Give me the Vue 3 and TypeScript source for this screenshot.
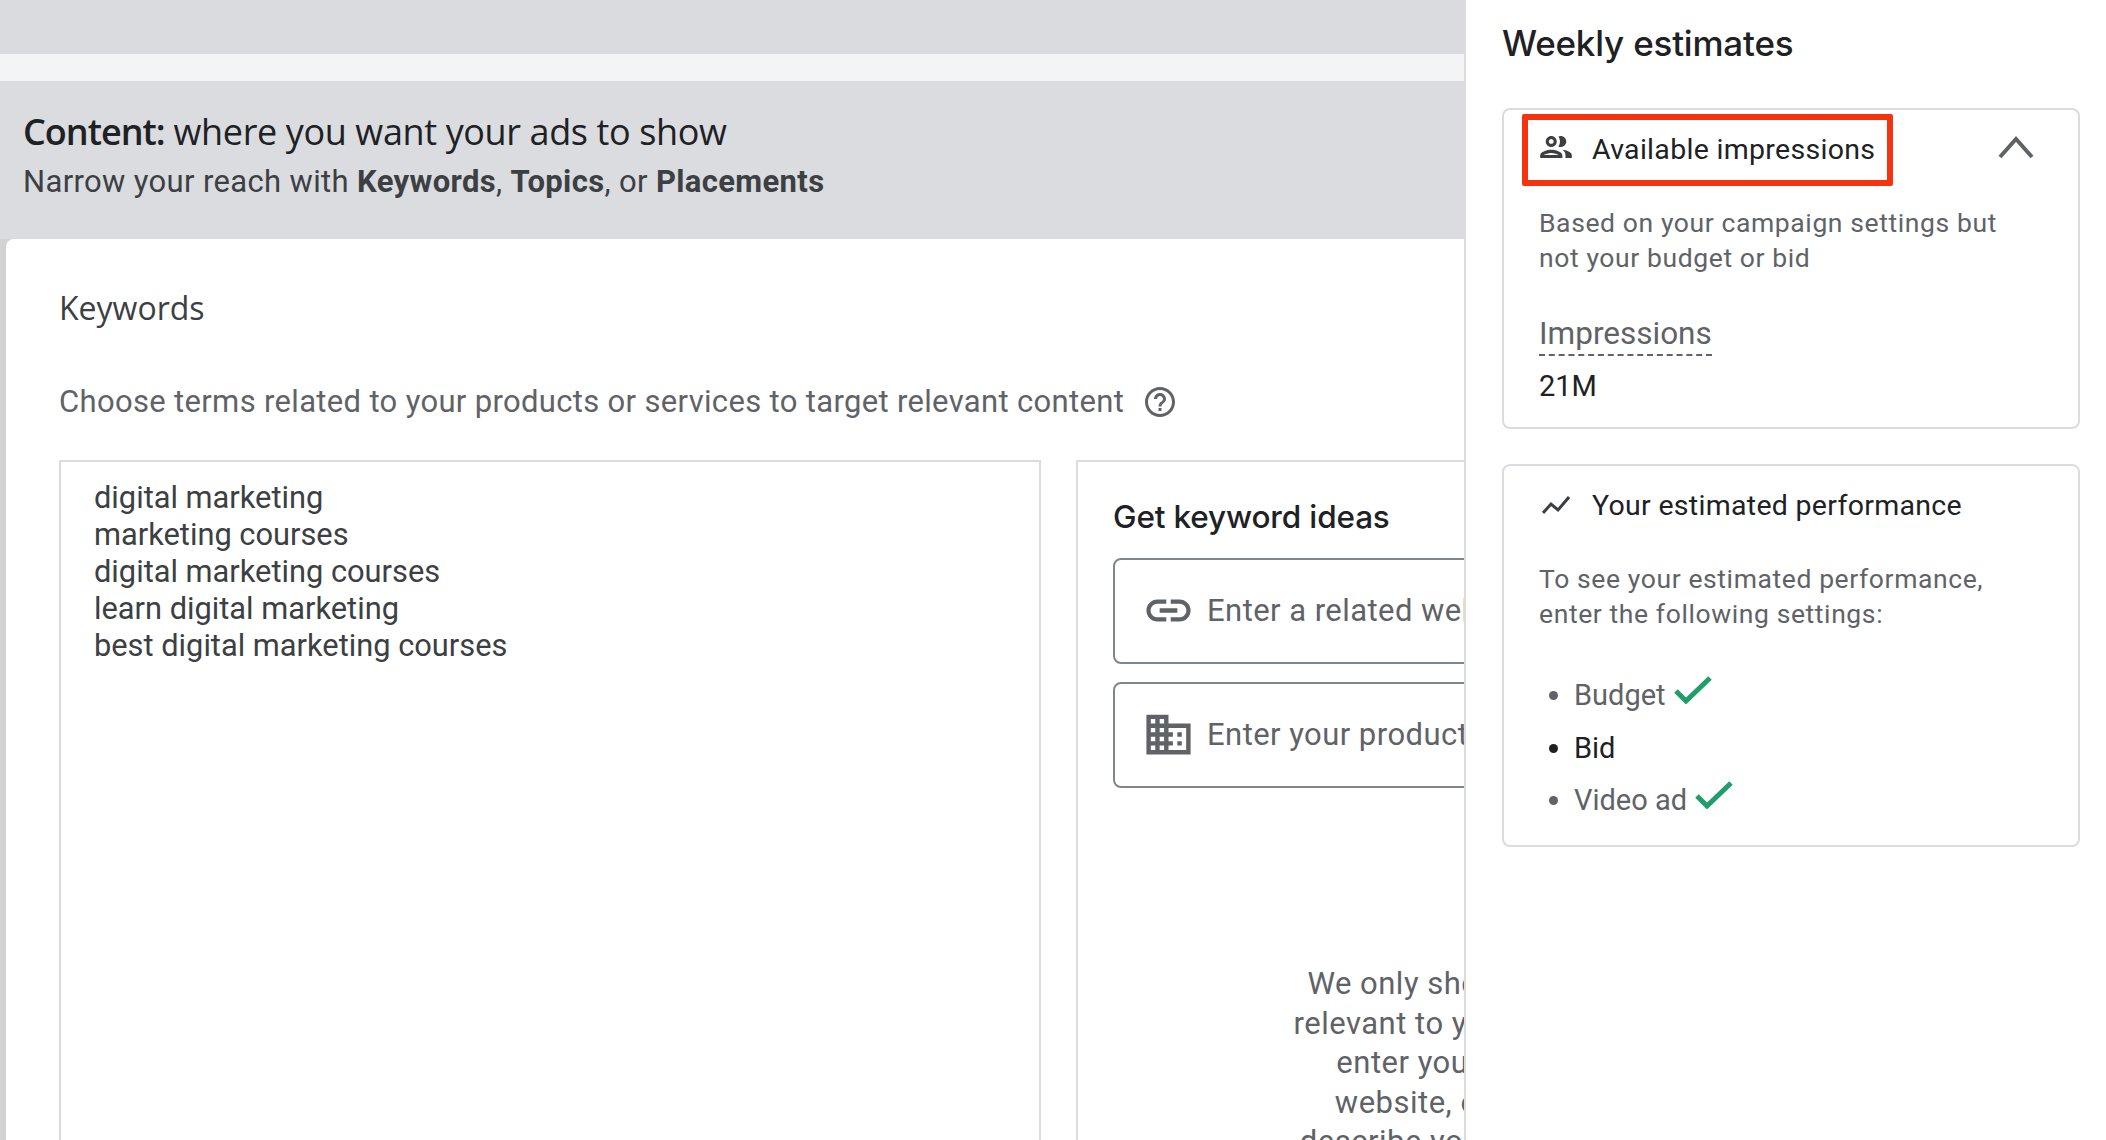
<script setup lang="ts">
const keywords = [
  'digital marketing',
  'marketing courses',
  'digital marketing courses',
  'learn digital marketing',
  'best digital marketing courses',
]

const hintLines = [
  'We only show options',
  'relevant to your website',
  'enter your details,',
  'website, or simply',
  'describe your products',
]
</script>

<template>
  <div class="page">
    <main class="main">
      <div class="top-band" />
      <div class="top-strip" />
      <section class="content-head">
        <h1><strong>Content:</strong> where you want your ads to show</h1>
        <p>Narrow your reach with <b>Keywords</b>, <b>Topics</b>, or <b>Placements</b></p>
      </section>
      <section class="card">
        <h2>Keywords</h2>
        <div class="lead">
          <span>Choose terms related to your products or services to target relevant content</span>
          <svg class="help" viewBox="0 0 24 24" width="36" height="36" fill="#5f6368">
            <path d="M11 18h2v-2h-2v2zm1-16C6.48 2 2 6.48 2 12s4.48 10 10 10 10-4.48 10-10S17.52 2 12 2zm0 18c-4.41 0-8-3.59-8-8s3.59-8 8-8 8 3.59 8 8-3.59 8-8 8zm0-14c-2.21 0-4 1.79-4 4h2c0-1.1.9-2 2-2s2 .9 2 2c0 2-3 1.75-3 5h2c0-2.25 3-2.5 3-5 0-2.21-1.79-4-4-4z" />
          </svg>
        </div>
        <div class="columns">
          <div class="keyword-box">
            <div v-for="k in keywords" :key="k">{{ k }}</div>
          </div>
          <div class="ideas">
            <h3>Get keyword ideas</h3>
            <div class="field">
              <svg viewBox="0 0 24 24" width="53" height="53" fill="#5f6368">
                <path d="M3.9 12c0-1.71 1.39-3.1 3.1-3.1h4V7H7c-2.76 0-5 2.24-5 5s2.24 5 5 5h4v-1.9H7c-1.71 0-3.1-1.39-3.1-3.1zM8 13h8v-2H8v2zm9-6h-4v1.9h4c1.71 0 3.1 1.39 3.1 3.1s-1.39 3.1-3.1 3.1h-4V17h4c2.76 0 5-2.24 5-5s-2.24-5-5-5z" />
              </svg>
              <span>Enter a related website to get started</span>
            </div>
            <div class="field">
              <svg viewBox="0 0 24 24" width="53" height="53" fill="#5f6368">
                <path d="M12 7V3H2v18h20V7H12zM6 19H4v-2h2v2zm0-4H4v-2h2v2zm0-4H4V9h2v2zm0-4H4V5h2v2zm4 12H8v-2h2v2zm0-4H8v-2h2v2zm0-4H8V9h2v2zm0-4H8V5h2v2zm10 12h-8v-2h2v-2h-2v-2h2v-2h-2V9h8v10zm-2-8h-2v2h2v-2zm0 4h-2v2h2v-2z" />
              </svg>
              <span>Enter your product or service</span>
            </div>
            <div class="hint">
              <div v-for="l in hintLines" :key="l">{{ l }}</div>
            </div>
          </div>
        </div>
      </section>
    </main>

    <aside class="side">
      <h2 class="side-title">Weekly estimates</h2>

      <div class="panel panel-first">
        <div class="panel-head">
          <svg class="head-icon" viewBox="0 0 24 24" width="38" height="38" fill="#3c4043">
            <path d="M9 13.75c-2.34 0-7 1.17-7 3.5V19h14v-1.75c0-2.33-4.66-3.5-7-3.5zM4.34 17c.84-.58 2.87-1.25 4.66-1.25s3.82.67 4.66 1.25H4.34zM9 12c1.93 0 3.5-1.57 3.5-3.5S10.93 5 9 5 5.5 6.57 5.5 8.5 7.07 12 9 12zm0-5c.83 0 1.5.67 1.5 1.5S9.83 10 9 10s-1.5-.67-1.5-1.5S8.17 7 9 7zm7.04 6.81c1.16.84 1.96 1.96 1.96 3.44V19h4v-1.75c0-2.02-3.5-3.17-5.96-3.44zM15 12c1.93 0 3.5-1.57 3.5-3.5S16.93 5 15 5c-.54 0-1.04.13-1.5.35.63.89 1 1.98 1 3.15s-.37 2.26-1 3.15c.46.22.96.35 1.5.35z" />
          </svg>
          <span>Available impressions</span>
          <svg class="chevron" viewBox="0 0 38 24" width="38" height="24" fill="none" stroke="#5f6368" stroke-width="4">
            <path d="M3 22 19 4l16 18" />
          </svg>
        </div>
        <p class="muted">Based on your campaign settings but<br>not your budget or bid</p>
        <div class="metric-label"><span>Impressions</span></div>
        <div class="metric-value">21M</div>
      </div>

      <div class="panel panel-second">
        <div class="panel-head">
          <svg class="head-icon" viewBox="0 0 28 18" width="28" height="18" fill="none" stroke="#3c4043" stroke-width="3">
            <path d="M1 17 9 8l7 6L27 1" />
          </svg>
          <span>Your estimated performance</span>
        </div>
        <p class="muted second-copy">To see your estimated performance,<br>enter the following settings:</p>
        <ul class="checklist">
          <li>
            Budget
            <svg viewBox="0 0 38 28" width="38" height="28" fill="none" stroke="#1f9d6b" stroke-width="5"><path d="M2 15l10 10L36 2" /></svg>
          </li>
          <li class="todo">Bid</li>
          <li>
            Video ad
            <svg viewBox="0 0 38 28" width="38" height="28" fill="none" stroke="#1f9d6b" stroke-width="5"><path d="M2 15l10 10L36 2" /></svg>
          </li>
        </ul>
      </div>

      <div class="callout" />
    </aside>
  </div>
</template>

<style>
html,
body {
  margin: 0;
  background: #fff;
}
</style>

<style scoped>
.page {
  display: flex;
  width: 2106px;
  height: 1140px;
  overflow: hidden;
  font-family: Roboto, "Liberation Sans", sans-serif;
  background: #fff;
}

.main {
  flex: 0 0 1464px;
  width: 1464px;
  height: 1140px;
  overflow: hidden;
  background: #d0d2d6;
}

.top-band {
  height: 54px;
  background: #dadbdf;
}

.top-strip {
  height: 27px;
  background: #f2f4f5;
}

.content-head {
  height: 158px;
  box-sizing: border-box;
  padding: 31px 0 0 23px;
  background: #dadce0;
}

.content-head h1 {
  margin: 0;
  font-family: "Open Sans", sans-serif;
  font-size: 36px;
  line-height: 40px;
  font-weight: 400;
  letter-spacing: -0.38px;
  color: #202124;
}

.content-head h1 strong {
  font-weight: 600;
  letter-spacing: -1px;
}

.content-head p {
  margin: 12px 0 0;
  font-size: 31px;
  line-height: 36px;
  letter-spacing: 0.35px;
  color: #3c4043;
}

.content-head p b {
  font-weight: 700;
}

.card {
  height: 901px;
  margin-left: 6px;
  box-sizing: border-box;
  padding: 47px 0 0 53px;
  background: #fff;
  border-top-left-radius: 8px;
}

.card h2 {
  margin: 0;
  font-family: "Open Sans", sans-serif;
  font-size: 32px;
  line-height: 44px;
  font-weight: 400;
  color: #3c4043;
}

.lead {
  display: flex;
  align-items: center;
  gap: 18px;
  margin-top: 50px;
  font-size: 31px;
  line-height: 44px;
  letter-spacing: 0.33px;
  color: #5f6368;
}

.columns {
  display: flex;
  gap: 35px;
  margin-top: 36px;
}

.keyword-box {
  flex: 0 0 982px;
  height: 720px;
  box-sizing: border-box;
  padding: 17px 0 0 33px;
  border: 2px solid #dadce0;
  font-size: 30.8px;
  line-height: 37px;
  color: #3c4043;
}

.ideas {
  flex: 0 0 760px;
  height: 720px;
  box-sizing: border-box;
  padding: 33px 0 0 35px;
  border: 2px solid #dadce0;
}

.ideas h3 {
  margin: 0 0 19px;
  font-family: Inter, sans-serif;
  font-size: 31.5px;
  line-height: 44px;
  font-weight: 500;
  letter-spacing: -0.15px;
  color: #202124;
}

.field {
  display: flex;
  align-items: center;
  gap: 12px;
  width: 700px;
  height: 106px;
  margin-bottom: 18px;
  box-sizing: border-box;
  padding: 0 0 1px 27px;
  border: 2px solid #80868b;
  border-radius: 8px;
  font-size: 31px;
  letter-spacing: 0.45px;
  color: #5f6368;
  white-space: nowrap;
}

.field svg {
  flex: none;
}

.hint {
  margin-top: 176px;
  width: 700px;
  text-align: center;
  font-size: 31px;
  line-height: 39.5px;
  letter-spacing: 0.5px;
  color: #5f6368;
  white-space: nowrap;
}

.side {
  position: relative;
  flex: 1;
  box-sizing: border-box;
  padding: 20px 26px 0 36px;
  border-left: 2px solid #dadce0;
}

.side-title {
  margin: 0 0 42px;
  font-family: Inter, sans-serif;
  font-size: 35px;
  line-height: 46px;
  font-weight: 500;
  letter-spacing: -0.2px;
  color: #202124;
}

.panel {
  box-sizing: border-box;
  padding-left: 35px;
  border: 2px solid #dadce0;
  border-radius: 8px;
}

.panel-first {
  height: 321px;
  margin-bottom: 35px;
  padding-top: 19px;
}

.panel-second {
  height: 383px;
  padding-top: 19px;
}

.panel-head {
  position: relative;
  display: flex;
  align-items: center;
  height: 40px;
  font-size: 28.5px;
  letter-spacing: 0.3px;
  color: #202124;
}

.head-icon {
  flex: none;
  margin: -4px 17px 0 -2px;
}

.panel-second .head-icon {
  margin: 0 22px 0 3px;
}

.chevron {
  position: absolute;
  right: 43px;
  top: 6px;
}

.muted {
  margin: 36px 0 0;
  font-size: 26.5px;
  line-height: 35px;
  letter-spacing: 0.6px;
  color: #5f6368;
}

.second-copy {
  margin-top: 36px;
}

.metric-label {
  margin-top: 39px;
  font-size: 31.5px;
  line-height: 40px;
  color: #5f6368;
}

.metric-label span {
  display: inline-block;
  border-bottom: 2px dashed #5f6368;
}

.metric-value {
  margin-top: 10px;
  font-size: 29px;
  line-height: 40px;
  color: #202124;
}

.checklist {
  margin: 44px 0 0;
  padding: 0;
  list-style: none;
  font-size: 29px;
  color: #5f6368;
}

.checklist li {
  position: relative;
  display: flex;
  align-items: flex-start;
  gap: 8px;
  height: 52.5px;
  padding-left: 35px;
  line-height: 40px;
}

.checklist li::before {
  content: "";
  position: absolute;
  left: 10px;
  top: 16px;
  width: 9px;
  height: 9px;
  border-radius: 50%;
  background: currentColor;
}

.checklist li svg {
  margin-top: 1px;
}

.checklist .todo {
  color: #202124;
}

.callout {
  position: absolute;
  left: 56px;
  top: 114px;
  width: 371px;
  height: 72px;
  box-sizing: border-box;
  border: 6px solid #f5330e;
  border-radius: 2px;
}
</style>
